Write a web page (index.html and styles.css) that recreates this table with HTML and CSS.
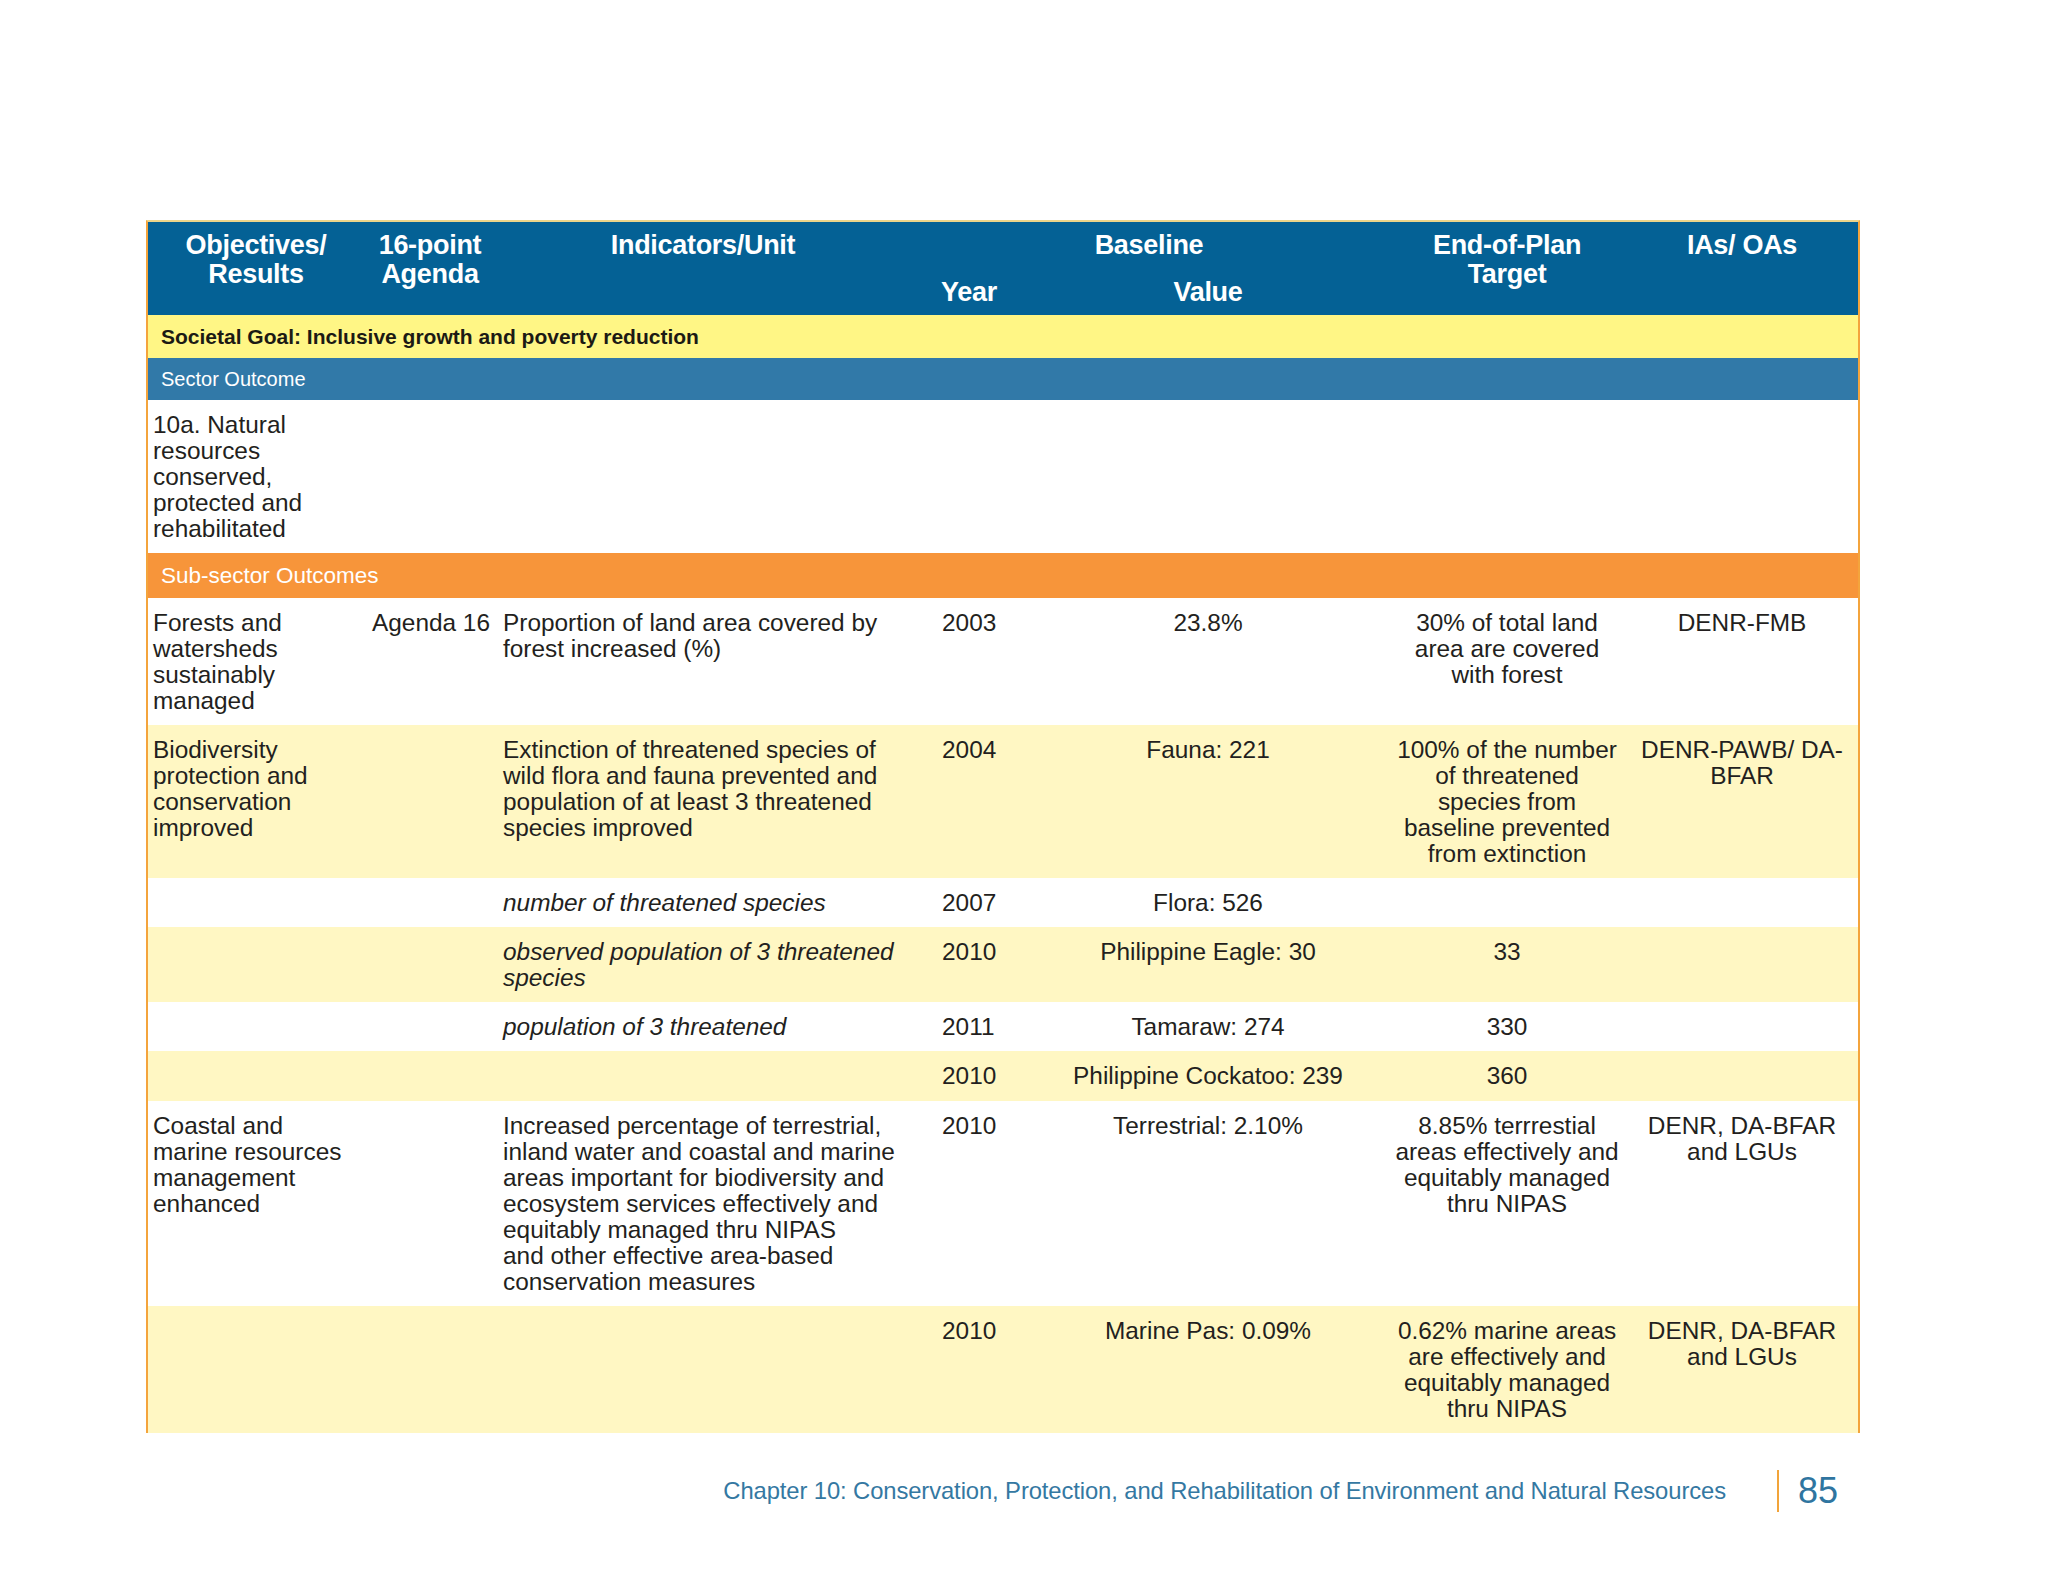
FILE: index.html
```html
<!DOCTYPE html>
<html lang="en">
<head>
<meta charset="utf-8">
<title>Chapter 10 Results Matrix</title>
<link rel="stylesheet" href="styles.css">
</head>
<body>
<div class="page">
  <div class="sheet">
    <table class="rm">
      <colgroup>
        <col class="c-obj"><col class="c-agenda"><col class="c-ind"><col class="c-year"><col class="c-val"><col class="c-tgt"><col class="c-ia">
      </colgroup>
      <thead>
        <tr class="h1">
          <th rowspan="2">Objectives/<br>Results</th>
          <th rowspan="2">16-point<br>Agenda</th>
          <th rowspan="2">Indicators/Unit</th>
          <th colspan="2">Baseline</th>
          <th rowspan="2">End-of-Plan<br>Target</th>
          <th rowspan="2">IAs/ OAs</th>
        </tr>
        <tr class="h2">
          <th>Year</th>
          <th>Value</th>
        </tr>
      </thead>
      <tbody>
        <tr class="goal"><td colspan="7">Societal Goal: Inclusive growth and poverty reduction</td></tr>
        <tr class="sector"><td colspan="7">Sector Outcome</td></tr>
        <tr class="row white">
          <td class="obj">10a. Natural<br>resources<br>conserved,<br>protected and<br>rehabilitated</td>
          <td class="agenda"></td><td class="ind"></td><td class="year"></td><td class="val"></td><td class="tgt"></td><td class="ia"></td>
        </tr>
        <tr class="sub"><td colspan="7">Sub-sector Outcomes</td></tr>
        <tr class="row white">
          <td class="obj">Forests and<br>watersheds<br>sustainably<br>managed</td>
          <td class="agenda">Agenda 16</td>
          <td class="ind">Proportion of land area covered by<br>forest increased (%)</td>
          <td class="year">2003</td>
          <td class="val">23.8%</td>
          <td class="tgt">30% of total land<br>area are covered<br>with forest</td>
          <td class="ia">DENR-FMB</td>
        </tr>
        <tr class="row cream">
          <td class="obj">Biodiversity<br>protection and<br>conservation<br>improved</td>
          <td class="agenda"></td>
          <td class="ind">Extinction of threatened species of<br>wild flora and fauna prevented and<br>population of at least 3 threatened<br>species improved</td>
          <td class="year">2004</td>
          <td class="val">Fauna: 221</td>
          <td class="tgt">100% of the number<br>of threatened<br>species from<br>baseline prevented<br>from extinction</td>
          <td class="ia">DENR-PAWB/ DA-<br>BFAR</td>
        </tr>
        <tr class="row white">
          <td class="obj"></td><td class="agenda"></td>
          <td class="ind"><em>number of threatened species</em></td>
          <td class="year">2007</td>
          <td class="val">Flora: 526</td>
          <td class="tgt"></td><td class="ia"></td>
        </tr>
        <tr class="row cream">
          <td class="obj"></td><td class="agenda"></td>
          <td class="ind"><em>observed population of 3 threatened<br>species</em></td>
          <td class="year">2010</td>
          <td class="val">Philippine Eagle: 30</td>
          <td class="tgt">33</td><td class="ia"></td>
        </tr>
        <tr class="row white">
          <td class="obj"></td><td class="agenda"></td>
          <td class="ind"><em>population of 3 threatened</em></td>
          <td class="year">2011</td>
          <td class="val">Tamaraw: 274</td>
          <td class="tgt">330</td><td class="ia"></td>
        </tr>
        <tr class="row cream tall1">
          <td class="obj"></td><td class="agenda"></td><td class="ind"></td>
          <td class="year">2010</td>
          <td class="val">Philippine Cockatoo: 239</td>
          <td class="tgt">360</td><td class="ia"></td>
        </tr>
        <tr class="row white">
          <td class="obj">Coastal and<br>marine resources<br>management<br>enhanced</td>
          <td class="agenda"></td>
          <td class="ind">Increased percentage of terrestrial,<br>inland water and coastal and marine<br>areas important for biodiversity and<br>ecosystem services effectively and<br>equitably managed thru NIPAS<br>and other effective area-based<br>conservation measures</td>
          <td class="year">2010</td>
          <td class="val">Terrestrial: 2.10%</td>
          <td class="tgt">8.85% terrrestial<br>areas effectively and<br>equitably managed<br>thru NIPAS</td>
          <td class="ia">DENR, DA-BFAR<br>and LGUs</td>
        </tr>
        <tr class="row cream">
          <td class="obj"></td><td class="agenda"></td><td class="ind"></td>
          <td class="year">2010</td>
          <td class="val">Marine Pas: 0.09%</td>
          <td class="tgt">0.62% marine areas<br>are effectively and<br>equitably managed<br>thru NIPAS</td>
          <td class="ia">DENR, DA-BFAR<br>and LGUs</td>
        </tr>
      </tbody>
    </table>
  </div>
  <footer class="folio">
    <span class="chapter">Chapter 10: Conservation, Protection, and Rehabilitation of Environment and Natural Resources</span>
    <span class="rule"></span>
    <span class="pageno">85</span>
  </footer>
</div>
</body>
</html>
```

FILE: styles.css
```css
html, body {
  margin: 0;
  padding: 0;
  background: #ffffff;
}

body {
  font-family: "Liberation Sans", Arial, sans-serif;
  color: #231f20;
}

.page {
  width: 2048px;
  height: 1582px;
  padding-top: 220px;
  box-sizing: border-box;
}

.sheet {
  margin-left: 146px;
  width: 1710px;
  border-top: 2px solid #ecd48a;
  border-left: 2px solid #f4a43c;
  border-right: 2px solid #f4a43c;
}

.rm {
  width: 1710px;
  table-layout: fixed;
  border-collapse: collapse;
  border-spacing: 0;
}

.c-obj { width: 216px; }
.c-agenda { width: 132px; }
.c-ind { width: 414px; }
.c-year { width: 118px; }
.c-val { width: 360px; }
.c-tgt { width: 238px; }
.c-ia { width: 232px; }

/* header */
.rm thead {
  background: #046195;
}

.rm th {
  color: #ffffff;
  font-weight: bold;
  font-size: 27px;
  letter-spacing: -0.3px;
  line-height: 29px;
  text-align: center;
  vertical-align: top;
  padding: 9px 0 0 0;
  white-space: nowrap;
}

.rm tr.h1 {
  height: 52px;
}

.rm tr.h2 {
  height: 41px;
}

.rm tr.h2 th {
  padding-top: 4px;
}

/* band rows */
.goal td {
  height: 43px;
  padding: 0 0 0 13px;
  background: #fff685;
  font-weight: bold;
  font-size: 21px;
  color: #1c1a14;
  vertical-align: middle;
}

.sector td {
  height: 42px;
  padding: 0 0 0 13px;
  background: #3179a8;
  color: #ffffff;
  font-size: 20px;
  vertical-align: middle;
}

.sub td {
  height: 45px;
  padding: 0 0 0 13px;
  background: #f7953a;
  color: #ffffff;
  font-size: 22.5px;
  vertical-align: middle;
}

/* data rows */
.row td {
  font-size: 24.4px;
  line-height: 26px;
  vertical-align: top;
  padding: 12px 0 11px 0;
  white-space: nowrap;
}

.row.tall1 td {
  padding-bottom: 12px;
}

.row.white td {
  background: #ffffff;
}

.row.cream td {
  background: #fff7c3;
}

.row td.obj {
  padding-left: 5px;
}

.row td.agenda {
  text-align: right;
  padding-right: 6px;
}

.row td.ind {
  padding-left: 7px;
}

.row td.year {
  padding-left: 32px;
}

.row td.val,
.row td.tgt,
.row td.ia {
  text-align: center;
}

.row em {
  font-style: italic;
}

/* footer */
.folio {
  display: flex;
  justify-content: flex-end;
  align-items: center;
  height: 42px;
  margin-top: 37px;
  padding-right: 210px;
}

.chapter {
  font-size: 23.8px;
  color: #3478a2;
  letter-spacing: -0.1px;
}

.rule {
  width: 2px;
  height: 42px;
  background: #f2a43a;
  margin-left: 51px;
  margin-right: 19px;
}

.pageno {
  font-size: 36px;
  color: #2f75a0;
  line-height: 42px;
}
```
